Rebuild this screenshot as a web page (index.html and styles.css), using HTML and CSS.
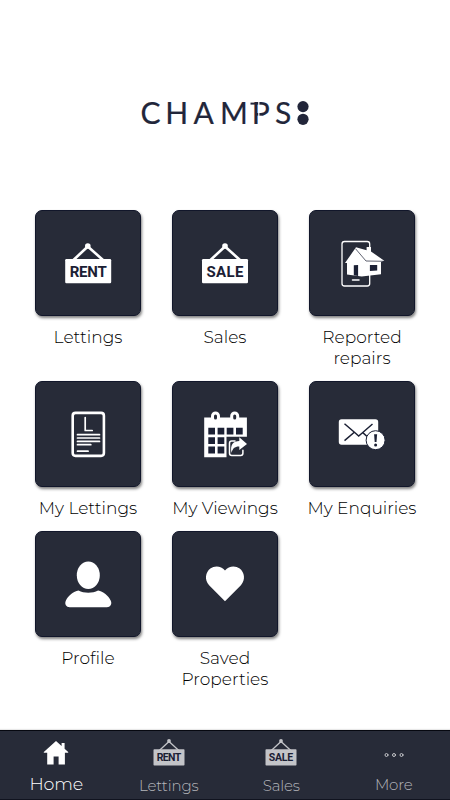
FILE: index.html
```html
<!DOCTYPE html>
<html lang="en">
<head>
  <meta charset="UTF-8" />
  <meta name="viewport" content="width=device-width, initial-scale=1" />
  <title>Champs</title>
  <link rel="stylesheet" href="styles.css">
</head>
<body>
  <header class="header">
    <svg class="logo" width="175" height="44" viewBox="0 0 175 44">
      <text class="logo-text" y="34"><tspan x="0.5">C</tspan><tspan x="25.2">H</tspan><tspan x="53.5">A</tspan><tspan x="80">M</tspan><tspan x="111.8">P</tspan><tspan x="135">S</tspan></text>
      <path class="logo-flag" d="M110.5 13.6h5" />
      <path class="logo-cut" d="M118.8 10v27" />
      <circle cx="163" cy="16.6" r="5.6" />
      <circle cx="163" cy="29.3" r="5.6" />
    </svg>
  </header>

  <main class="menu">
    <a class="item">
      <div class="tile">
        <svg viewBox="0 0 106 106">
          <path class="line" stroke-width="2.6" d="M38.5 50 52.8 36.5 68 50" />
          <circle cx="52.8" cy="36" r="2.8" />
          <rect x="30.2" y="49" width="46" height="24.3" rx="1.2" />
          <text class="sign" x="53.2" y="67.3" textLength="37">RENT</text>
        </svg>
      </div>
      <span class="label">Lettings</span>
    </a>
    <a class="item">
      <div class="tile">
        <svg viewBox="0 0 106 106">
          <path class="line" stroke-width="2.6" d="M38.5 50 53 36.5 68 50" />
          <circle cx="53" cy="36" r="2.8" />
          <rect x="30" y="49" width="46" height="24.3" rx="1.2" />
          <text class="sign" x="53" y="67.3" textLength="37">SALE</text>
        </svg>
      </div>
      <span class="label">Sales</span>
    </a>
    <a class="item">
      <div class="tile">
        <svg viewBox="0 0 106 106">
          <rect class="line" stroke-width="1.3" x="33" y="31.5" width="27.7" height="44.5" rx="2.5" />
          <path class="line" stroke-width="1.5" d="M43.5 70h6.5" />
          <path d="M36 53 47 37.3 57.6 40.2V37h4.4v4.5L75.3 50.7 72 52v12.3L52.7 66.5 38 64.5V53z" />
          <path class="dark-line" stroke-width=".7" d="M46.5 38.7 57 51 75 51.3" />
          <path class="dark" d="M44.8 55.3l4.3-.4v11.1l-4.3-.7zM60.9 55h7.3v5.4l-7.3.5z" />
        </svg>
      </div>
      <span class="label">Reported repairs</span>
    </a>
    <a class="item">
      <div class="tile">
        <svg viewBox="0 0 106 106">
          <rect class="line" stroke-width="2.6" x="37.7" y="31.9" width="31.2" height="43" rx="2.8" />
          <path class="line" stroke-width="1.7" d="M50.2 36.5v13h7M42.5 53.7h22M42.5 57h22M42.5 60.4h22M42.5 63.7h13.3M42.5 70.2h10.6" />
        </svg>
      </div>
      <span class="label">My Lettings</span>
    </a>
    <a class="item">
      <div class="tile">
        <svg viewBox="0 0 106 106">
          <path d="M32.2 36.5h42.7v19.3H54.5v20.4H32.2z" />
          <rect class="ring" x="40.5" y="32" width="6" height="8" rx="3" />
          <rect class="ring" x="59.7" y="32" width="6" height="8" rx="3" />
          <path class="dark" d="M36.3 46.8h6.7v6.8h-6.7zM45.6 46.8h6.7v6.8h-6.7zM54.7 46.8h6.7v6.8h-6.7zM64 46.8h6.7v6.8h-6.7zM36.3 56.3h6.7v6.8h-6.7zM45.6 56.3h6.7v6.8h-6.7zM36.3 65.6h6.7v6.8h-6.7zM45.6 65.6h6.7v6.8h-6.7z" />
          <path class="line" stroke-width="1.5" d="M63 60h-3.3q-2.2 0-2.2 2.2v10q0 2.2 2.2 2.2h9q2.2 0 2.2-2.2v-3" />
          <path d="M59.5 72C57.8 63.5 61.5 60 67.3 60v-3.7l7.7 6.8-7.7 6v-3.7c-4.3-.2-6.8 1.8-7.8 6.6z" />
        </svg>
      </div>
      <span class="label">My Viewings</span>
    </a>
    <a class="item">
      <div class="tile">
        <svg viewBox="0 0 106 106">
          <rect x="29.8" y="38.3" width="39.4" height="25.5" rx="2.8" />
          <path class="dark-line" stroke-width="1.5" d="M35.5 42.8 46 51.8 49.7 55 53.5 51.8 63.5 43M35.5 59.6 45.3 51.2M53.5 51.4 60 57.2" />
          <circle class="badge" cx="66.6" cy="59.2" r="9.5" />
          <path class="dark" d="M65.1 53.2h3l-.6 7.8h-1.8z" />
          <circle class="dark" cx="66.6" cy="64" r="1.5" />
        </svg>
      </div>
      <span class="label">My Enquiries</span>
    </a>
    <a class="item">
      <div class="tile">
        <svg viewBox="0 0 106 106">
          <ellipse cx="53.3" cy="44.3" rx="11.5" ry="13.8" />
          <path d="M43.5 59.6c5.5 2.9 14 2.9 19.6 0 5 .8 10.3 5.2 12.7 10.2 1.5 3.4-.5 6.4-3.9 6.4H34.7c-3.4 0-5.4-3-3.9-6.4 2.4-5 7.7-9.4 12.7-10.2z" />
        </svg>
      </div>
      <span class="label">Profile</span>
    </a>
    <a class="item">
      <div class="tile">
        <svg viewBox="0 0 106 106">
          <path d="M53 70.2 37.1 54.3C32.2 49 33.5 41.2 38.3 37.6c4.7-3.4 11-2.5 14.7 1.9 3.7-4.4 10-5.3 14.7-1.9 4.8 3.6 6.1 11.4 1.2 16.7z" />
        </svg>
      </div>
      <span class="label">Saved Properties</span>
    </a>
  </main>

  <nav class="tabs">
    <a class="tab active">
      <svg width="32" height="30" viewBox="0 0 32 30">
        <path d="M16 3l5.6 5V5h3v5.7l3.6 3.3v.8h-3.3V26.5h-6.3v-8h-5v8H7.2V14.8H3.8V14z" />
      </svg>
      <span class="tab-label">Home</span>
    </a>
    <a class="tab low">
      <svg width="32" height="30" viewBox="0 0 32 30">
        <path class="line" stroke-width="1.3" d="M6.3 12.5 16 3.5 25.8 12.5" />
        <circle cx="16" cy="3" r="1.9" />
        <rect x=".5" y="11.3" width="31" height="16.2" rx=".8" />
        <text class="sign small" x="16" y="23" textLength="24.5">RENT</text>
      </svg>
      <span class="tab-label">Lettings</span>
    </a>
    <a class="tab low">
      <svg width="32" height="30" viewBox="0 0 32 30">
        <path class="line" stroke-width="1.3" d="M6.3 12.5 16 3.5 25.8 12.5" />
        <circle cx="16" cy="3" r="1.9" />
        <rect x=".5" y="11.3" width="31" height="16.2" rx=".8" />
        <text class="sign small" x="16" y="23" textLength="24.5">SALE</text>
      </svg>
      <span class="tab-label">Sales</span>
    </a>
    <a class="tab">
      <svg width="32" height="30" viewBox="0 0 32 30">
        <g class="line" stroke-width="1">
          <circle cx="8.5" cy="17" r="1.5" />
          <circle cx="16" cy="17" r="1.5" />
          <circle cx="23.5" cy="17" r="1.5" />
        </g>
      </svg>
      <span class="tab-label">More</span>
    </a>
  </nav>
</body>
</html>
```
FILE: styles.css
```css
* {
  box-sizing: border-box;
}

body {
  margin: 0;
  height: 100vh;
  display: flex;
  flex-direction: column;
  overflow: hidden;
  background-color: #fff;
  color: #000;
  font-family: Montserrat, Inter, sans-serif;
  font-weight: 350;
}

.header {
  height: 210px;
  padding: 90px 0 0 140px;
}

.logo {
  display: block;
  fill: #22263a;
}

.logo-text {
  font-family: Lato, sans-serif;
  font-size: 30px;
  font-weight: 400;
  stroke: #22263a;
  stroke-width: 0.2;
}

.logo-flag {
  stroke: #22263a;
  stroke-width: 2;
}

.logo-cut {
  stroke: #fff;
  stroke-width: 1.2;
}

.menu {
  flex: 1;
  display: grid;
  grid-template-columns: repeat(3, 137px);
  justify-content: center;
  align-content: start;
}

.item {
  display: flex;
  flex-direction: column;
  align-items: center;
  padding-bottom: 12.5px;
}

.tile {
  width: 106px;
  height: 106px;
  border: 1px solid #11162a;
  border-radius: 7px;
  background-color: #272b38;
  box-shadow: 1px 2px 3px rgba(0, 0, 0, 0.5);
}

.tile svg {
  display: block;
  width: 106px;
  height: 106px;
  margin: -1px;
  fill: #fff;
}

.label {
  width: 120px;
  margin-top: 10.6px;
  font-size: 17px;
  line-height: 21px;
  text-align: center;
}

.line {
  fill: none;
  stroke: #fff;
  stroke-linecap: round;
  stroke-linejoin: round;
}

.dark {
  fill: #1b2034;
}

.dark-line {
  fill: none;
  stroke: #1b2034;
}

.ring {
  fill: #272b38;
  stroke: #fff;
  stroke-width: 3;
}

.badge {
  stroke: #1b2034;
  stroke-width: 1;
}

.sign {
  font-family: Roboto, sans-serif;
  font-size: 15px;
  font-weight: 700;
  text-anchor: middle;
  fill: #1b2034;
}

.sign.small {
  font-size: 10.5px;
}

.tabs {
  height: 70px;
  display: flex;
  border-top: 1px solid #060810;
  border-bottom: 1px solid #10131f;
  background-color: #272b38;
  box-shadow: 0 -1px 1px #e8e8e8;
}

.tab {
  flex: 1;
  display: flex;
  flex-direction: column;
  align-items: center;
  padding-top: 7px;
  color: #b5b6bb;
}

.tab svg {
  display: block;
  fill: #c3c4c8;
}

.tab .line {
  fill: none;
  stroke: #c3c4c8;
}

.tab-label {
  margin-top: 7px;
  font-size: 15px;
  line-height: 20px;
  letter-spacing: -0.15px;
}

.low .tab-label {
  margin-top: 8px;
}

.active {
  color: #fff;
}

.active svg {
  fill: #fff;
}

.active .tab-label {
  margin-top: 6px;
  font-size: 17.5px;
}
```
